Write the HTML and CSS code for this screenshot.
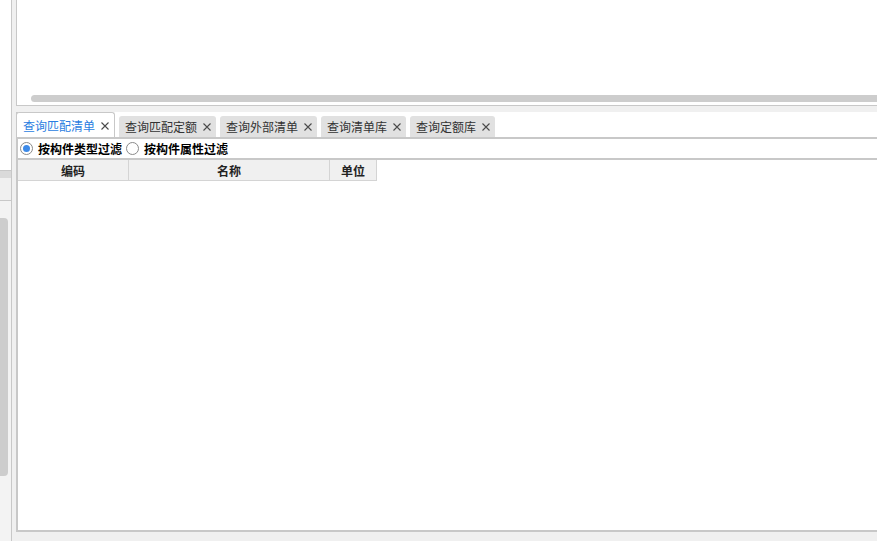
FILE: index.html
```html
<!DOCTYPE html>
<html lang="zh">
<head>
<meta charset="utf-8">
<link rel="stylesheet" href="styles.css">
</head>
<body>
<div class="app">
  <div class="leftbar">
    <div class="lb-top"></div>
    <div class="lb-head"></div>
    <div class="lb-band"></div>
    <div class="lb-body"><div class="vthumb"></div></div>
  </div>
  <div class="gutter"></div>
  <div class="main">
    <div class="toppanel">
      <div class="hthumb"></div>
    </div>
    <div class="band"></div>
    <div class="lower">
      <div class="tabstrip">
        <div class="tab active"><span class="tab-label">查询匹配清单</span><svg class="tab-close" viewBox="0 0 8 8"><path d="M0.5 0.5L7.5 7.5M7.5 0.5L0.5 7.5"/></svg></div>
        <div class="tab"><span class="tab-label">查询匹配定额</span><svg class="tab-close" viewBox="0 0 8 8"><path d="M0.5 0.5L7.5 7.5M7.5 0.5L0.5 7.5"/></svg></div>
        <div class="tab"><span class="tab-label">查询外部清单</span><svg class="tab-close" viewBox="0 0 8 8"><path d="M0.5 0.5L7.5 7.5M7.5 0.5L0.5 7.5"/></svg></div>
        <div class="tab"><span class="tab-label">查询清单库</span><svg class="tab-close" viewBox="0 0 8 8"><path d="M0.5 0.5L7.5 7.5M7.5 0.5L0.5 7.5"/></svg></div>
        <div class="tab"><span class="tab-label">查询定额库</span><svg class="tab-close" viewBox="0 0 8 8"><path d="M0.5 0.5L7.5 7.5M7.5 0.5L0.5 7.5"/></svg></div>
      </div>
      <div class="filters">
        <label class="radio"><span class="radio-dot checked"></span><span class="radio-text">按构件类型过滤</span></label>
        <label class="radio"><span class="radio-dot"></span><span class="radio-text">按构件属性过滤</span></label>
      </div>
      <div class="table">
        <div class="thead">
          <div class="th col-code">编码</div>
          <div class="th col-name">名称</div>
          <div class="th col-unit">单位</div>
        </div>
        <div class="tbody"></div>
      </div>
      <div class="footer"></div>
    </div>
  </div>
</div>
</body>
</html>
```
FILE: styles.css
```css
* { box-sizing: border-box; }
html, body {
  margin: 0;
  padding: 0;
  width: 877px;
  height: 541px;
  overflow: hidden;
  background: #f0f0f0;
  font-family: "Noto Sans CJK SC", "Noto Sans", sans-serif;
  font-size: 12px;
}
.app {
  display: flex;
  width: 877px;
  height: 541px;
}
.leftbar {
  width: 12px;
  flex: none;
  border-right: 1px solid #c8c8c8;
  display: flex;
  flex-direction: column;
}
.lb-top {
  height: 171px;
  background: #ffffff;
  border-bottom: 1px solid #c8c8c8;
}
.lb-head {
  height: 7px;
  background: #dadada;
}
.lb-band {
  height: 23px;
  background: #f0f0f0;
  border-bottom: 1px solid #c8c8c8;
}
.lb-body {
  flex: 1;
  background: #f3f3f3;
  padding-top: 17px;
}
.vthumb {
  width: 8px;
  height: 258px;
  background: #cdcdcd;
  border-radius: 0 4px 4px 0;
}
.gutter {
  width: 4px;
  flex: none;
  background: #f0f0f0;
}
.main {
  flex: 1;
  display: flex;
  flex-direction: column;
  min-width: 0;
}
.toppanel {
  height: 106px;
  background: #ffffff;
  border-left: 1px solid #c8c8c8;
  border-bottom: 1px solid #c8c8c8;
  padding: 95px 0 0 14px;
}
.hthumb {
  height: 7px;
  background: #cdcdcd;
  border-radius: 4px 0 0 4px;
}
.band {
  height: 6px;
  background: #f0f0f0;
}
.lower {
  flex: 1;
  display: flex;
  flex-direction: column;
}
.tabstrip {
  height: 27px;
  background: #ffffff;
  border-left: 2px solid #c8c8c8;
  border-bottom: 2px solid #c8c8c8;
  display: flex;
  align-items: flex-end;
  gap: 4px;
}
.tab {
  height: 21px;
  display: flex;
  align-items: center;
  padding: 0 5px 0 6px;
  background: #e1e1e1;
  color: #333333;
  border-radius: 3px 3px 0 0;
  white-space: nowrap;
  line-height: 1;
}
.tab.active {
  height: 25px;
  margin-left: -2px;
  padding-top: 2px;
  background: #ffffff;
  color: #2a7de1;
  border: 1px solid #c8c8c8;
  border-bottom: none;
}
.tab-label {
  font-size: 12px;
}
.tab-close {
  margin-left: 6px;
  width: 8px;
  height: 8px;
  fill: none;
  stroke: #4a4a4a;
  stroke-width: 1.1;
}
.filters {
  height: 19px;
  background: #ffffff;
  border-left: 2px solid #c8c8c8;
  display: flex;
  align-items: center;
  padding-left: 2px;
  gap: 4px;
}
.radio {
  display: flex;
  align-items: center;
  gap: 5px;
  font-weight: bold;
  color: #000000;
  line-height: 1;
}
.radio-dot {
  width: 13px;
  height: 13px;
  border: 1px solid #8a8a8a;
  border-radius: 50%;
  background: #ffffff;
  display: flex;
  align-items: center;
  justify-content: center;
}
.radio-dot.checked::after {
  content: "";
  width: 7px;
  height: 7px;
  border-radius: 50%;
  background: #3d8ae8;
}
.table {
  flex: 1;
  background: #ffffff;
  border-left: 2px solid #c8c8c8;
  border-top: 2px solid #c8c8c8;
  border-bottom: 2px solid #c8c8c8;
  display: flex;
  flex-direction: column;
}
.thead {
  display: flex;
  height: 21px;
}
.th {
  background: #f0f0f0;
  border-right: 1px solid #d4d4d4;
  border-bottom: 1px solid #d4d4d4;
  display: flex;
  align-items: center;
  justify-content: center;
  font-weight: bold;
  color: #222222;
}
.col-code { width: 111px; }
.col-name { width: 201px; }
.col-unit { width: 47px; }
.tbody { flex: 1; }
.footer {
  height: 9px;
  background: #f0f0f0;
}
```
